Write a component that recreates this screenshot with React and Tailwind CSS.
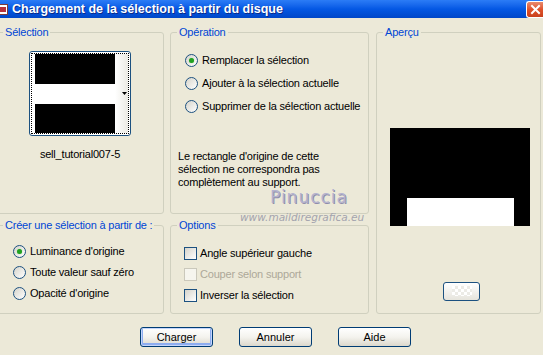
import React from 'react';

const Radio = ({ checked }) => (
  <span className="flex h-[13px] w-[13px] shrink-0 items-center justify-center rounded-full border border-[#1c5180] bg-linear-to-br from-[#d6d4cb] to-white">
    {checked && <span className="h-[5px] w-[5px] rounded-full bg-[#21a121] shadow-[0_0_1px_#7fd07f]" />}
  </span>
);

const Check = ({ disabled }) => (
  <span
    className={
      disabled
        ? 'h-[13px] w-[13px] shrink-0 border border-[#cac8bb] bg-[#f6f5ee]'
        : 'h-[13px] w-[13px] shrink-0 border border-[#1c5180] bg-linear-to-br from-[#d6d4cb] to-white'
    }
  />
);

const Group = ({ title, className, children }) => (
  <fieldset className={`rounded-[3px] border border-[#d0d0bf] ${className}`}>
    <legend className="ml-[6px] px-[2px] leading-[13px] text-[#0046d5]">{title}</legend>
    {children}
  </fieldset>
);

const Button = ({ children, primary }) => (
  <button
    className={`h-[20px] w-[73px] rounded-[3px] border border-[#003c74] bg-linear-to-b from-white via-[#f4f3ee] to-[#dcd8cc] leading-none text-black ${
      primary ? 'shadow-[inset_0_0_0_1px_#c4d5fb,inset_0_-1px_0_2px_#8eadf0]' : ''
    }`}
  >
    {children}
  </button>
);

export default function App() {
  return (
    <div
      className="relative h-[355px] w-[543px] overflow-hidden bg-[#ece9d8] text-[11px] leading-[13px] tracking-[-0.2px] text-black"
      style={{ fontFamily: '"Liberation Sans", Arial, sans-serif' }}
    >
      {/* Title bar */}
      <div className="flex h-[18px] items-center bg-linear-to-b from-[#2b7cf6] via-[#0458e4] to-[#0047c8]">
        <div className="ml-[-2px] flex h-[11px] w-[10px] items-center justify-center border border-[#7a3b3b] bg-white">
          <span className="h-[5px] w-[6px] bg-[#b8323b]" />
        </div>
        <span className="ml-[4px] text-[12.5px] font-bold tracking-normal text-white [text-shadow:1px_1px_0_#0a2a8a]">
          Chargement de la sélection à partir du disque
        </span>
        <div className="ml-auto flex h-[17px] w-[17px] items-center justify-center rounded-l-[3px] border border-r-0 border-white bg-linear-to-b from-[#e88a6c] via-[#e0522a] to-[#c8401c]">
          <svg width="11" height="11" viewBox="0 0 11 11">
            <path d="M2 2 L9 9 M9 2 L2 9" stroke="white" strokeWidth="2" strokeLinecap="square" />
          </svg>
        </div>
      </div>

      <div className="ml-[-4px] mt-[8px] flex">
        {/* Left column */}
        <div className="flex w-[168px] flex-col gap-[5px]">
          <Group title="Sélection" className="h-[188px]">
            <div className="mt-[12px] flex flex-col items-center">
              <div className="h-[85px] w-[102px] rounded-[3px] border border-[#1c5180] bg-white p-[1px]">
                <div className="flex h-full border border-dotted border-black pl-[3px]">
                  <div className="flex w-[80px] flex-col">
                    <div className="h-[30px] bg-black" />
                    <div className="h-[20px] bg-white" />
                    <div className="flex-1 bg-black" />
                  </div>
                  <div className="flex flex-1 items-center justify-end bg-linear-to-r from-white to-[#ebeae4] pr-[1px]">
                    <svg width="5" height="3" viewBox="0 0 5 3">
                      <path d="M0 0 H5 L2.5 3 Z" fill="black" />
                    </svg>
                  </div>
                </div>
              </div>
              <div className="mt-[12px]">sell_tutorial007-5</div>
            </div>
          </Group>
          <Group title="Créer une sélection à partir de :" className="h-[95px]">
            <div className="ml-[16px] mt-[13px] flex flex-col gap-[8px]">
              <div className="flex items-center gap-[4px]"><Radio checked /><span>Luminance d'origine</span></div>
              <div className="flex items-center gap-[4px]"><Radio /><span>Toute valeur sauf zéro</span></div>
              <div className="flex items-center gap-[4px]"><Radio /><span>Opacité d'origine</span></div>
            </div>
          </Group>
        </div>

        {/* Middle column */}
        <div className="ml-[6px] flex w-[199px] flex-col gap-[5px]">
          <Group title="Opération" className="h-[188px]">
            <div className="ml-[14px] mt-[15px] flex flex-col gap-[10px]">
              <div className="flex items-center gap-[4px]"><Radio checked /><span>Remplacer la sélection</span></div>
              <div className="flex items-center gap-[4px]"><Radio /><span>Ajouter à la sélection actuelle</span></div>
              <div className="flex items-center gap-[4px]"><Radio /><span>Supprimer de la sélection actuelle</span></div>
            </div>
            <p className="ml-[7px] mt-[37px]">
              Le rectangle d'origine de cette
              <br />
              sélection ne correspondra pas
              <br />
              complètement au support.
            </p>
          </Group>
          <Group title="Options" className="h-[95px]">
            <div className="ml-[13px] mt-[15px] flex flex-col gap-[8px]">
              <div className="flex items-center gap-[3px]"><Check /><span>Angle supérieur gauche</span></div>
              <div className="flex items-center gap-[3px] text-[#aca899]"><Check disabled /><span>Couper selon support</span></div>
              <div className="flex items-center gap-[3px]"><Check /><span>Inverser la sélection</span></div>
            </div>
          </Group>
        </div>

        {/* Right column */}
        <div className="ml-[7px] w-[165px]">
          <Group title="Aperçu" className="h-[288px]">
            <div className="ml-[13px] mt-[89px] flex h-[98px] w-[140px] items-end bg-black pl-[17px]">
              <div className="h-[28px] w-[107px] bg-white" />
            </div>
            <div className="ml-[66px] mt-[56px] h-[19px] w-[37px] rounded-[3px] border border-[#1c5180] bg-linear-to-b from-white to-[#e6e4dc]">
              <div className="mx-auto mt-[3px] h-[10px] w-[20px] bg-[repeating-conic-gradient(#ecebe6_0_25%,#ffffff_0_50%)] bg-[length:6px_6px]" />
            </div>
          </Group>
        </div>
      </div>

      {/* Buttons */}
      <div className="ml-[140px] mt-[13px] flex gap-[26px] tracking-normal">
        <Button primary>Charger</Button>
        <Button>Annuler</Button>
        <Button>Aide</Button>
      </div>

      {/* Watermark */}
      <div className="absolute left-[270px] top-[191px] text-[17px] tracking-[1px] text-[#b4b3cf] [text-shadow:1px_1px_0_#8f8dab]" style={{ fontFamily: '"DejaVu Sans", sans-serif' }}>
        Pinuccia
      </div>
      <div className="absolute left-[240px] top-[211px] text-[10.5px] italic tracking-normal text-[#a4a4ae]" style={{ fontFamily: '"DejaVu Sans", sans-serif' }}>
        www.maildiregrafica.eu
      </div>
    </div>
  );
}
